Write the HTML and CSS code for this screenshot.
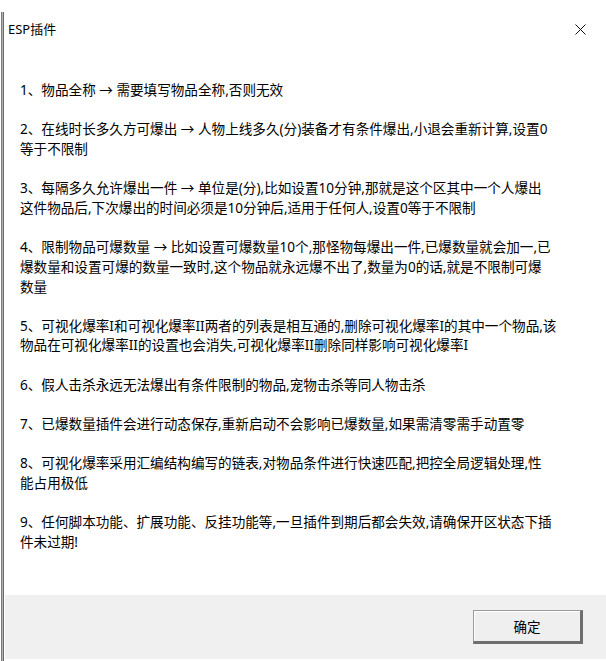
FILE: index.html
```html
<!DOCTYPE html>
<html lang="zh-CN">
<head>
<meta charset="utf-8">
<title>ESP插件</title>
<link rel="stylesheet" href="styles.css">
</head>
<body>
<div class="screen">
  <div class="edge"></div>
  <div class="window">
    <div class="titlebar">
      <span class="title">ESP插件</span>
      <svg class="close" width="11" height="11" viewBox="0 0 11 11">
        <path d="M0.5 0.5 L10.5 10.5 M10.5 0.5 L0.5 10.5" stroke="#111" stroke-width="1" fill="none"/>
      </svg>
    </div>
    <div class="content">
      <p>1、物品全称 → 需要填写物品全称,否则无效</p>
      <p>2、在线时长多久方可爆出 → 人物上线多久(分)装备才有条件爆出,小退会重新计算,设置0<br>等于不限制</p>
      <p>3、每隔多久允许爆出一件 → 单位是(分),比如设置10分钟,那就是这个区其中一个人爆出<br>这件物品后,下次爆出的时间必须是10分钟后,适用于任何人,设置0等于不限制</p>
      <p>4、限制物品可爆数量 → 比如设置可爆数量10个,那怪物每爆出一件,已爆数量就会加一,已<br>爆数量和设置可爆的数量一致时,这个物品就永远爆不出了,数量为0的话,就是不限制可爆<br>数量</p>
      <p>5、可视化爆率I和可视化爆率II两者的列表是相互通的,删除可视化爆率I的其中一个物品,该<br>物品在可视化爆率II的设置也会消失,可视化爆率II删除同样影响可视化爆率I</p>
      <p>6、假人击杀永远无法爆出有条件限制的物品,宠物击杀等同人物击杀</p>
      <p>7、已爆数量插件会进行动态保存,重新启动不会影响已爆数量,如果需清零需手动置零</p>
      <p>8、可视化爆率采用汇编结构编写的链表,对物品条件进行快速匹配,把控全局逻辑处理,性<br>能占用极低</p>
      <p>9、任何脚本功能、扩展功能、反挂功能等,一旦插件到期后都会失效,请确保开区状态下插<br>件未过期!</p>
    </div>
    <div class="footer">
      <button class="ok">确定</button>
    </div>
    <div class="bottom-line"></div>
  </div>
</div>
</body>
</html>
```

FILE: styles.css
```css
html, body {
  margin: 0;
  padding: 0;
  background: #ffffff;
}

body {
  font-family: "Noto Sans", "Noto Sans CJK SC", sans-serif;
  color: #000;
}

.screen {
  display: flex;
  width: 606px;
  height: 661px;
  overflow: hidden;
}

.edge {
  width: 3px;
  margin-top: 12px;
  margin-left: 1px;
  margin-right: 1px;
  background: #b4b4b4;
  border-left: 1px solid #7a7a7a;
  border-right: 1px solid #6a6a6a;
  box-sizing: border-box;
  flex: none;
}

.window {
  flex: 1;
  display: flex;
  flex-direction: column;
  min-width: 0;
}

.titlebar {
  height: 58px;
  display: flex;
  align-items: center;
  justify-content: space-between;
  padding-left: 3px;
  padding-right: 20px;
  flex: none;
}

.title {
  font-size: 13px;
  line-height: 16px;
}

.close {
  display: block;
}

.content {
  padding: 22px 0 0 15px;
  font-size: 13.6px;
  line-height: 19.65px;
  white-space: nowrap;
}

.content p {
  margin: 0 0 19.65px 0;
}

.footer {
  margin-top: auto;
  height: 64px;
  background: #f0f0f0;
  display: flex;
  justify-content: flex-end;
  align-items: flex-start;
  padding: 15px 23px 0 0;
  box-sizing: border-box;
  flex: none;
}

.bottom-line {
  height: 2px;
  background: #ffffff;
  flex: none;
}

.ok {
  width: 110px;
  height: 34px;
  background: #efefef;
  border: 1px solid #9a9a9a;
  border-right: 3px solid #6e6e6e;
  border-bottom: 3px solid #6e6e6e;
  box-shadow: inset 1px 1px 0 #ffffff;
  font-family: "Noto Sans", "Noto Sans CJK SC", sans-serif;
  font-size: 13.5px;
  color: #000;
  padding: 0;
  margin: 0;
}
```
